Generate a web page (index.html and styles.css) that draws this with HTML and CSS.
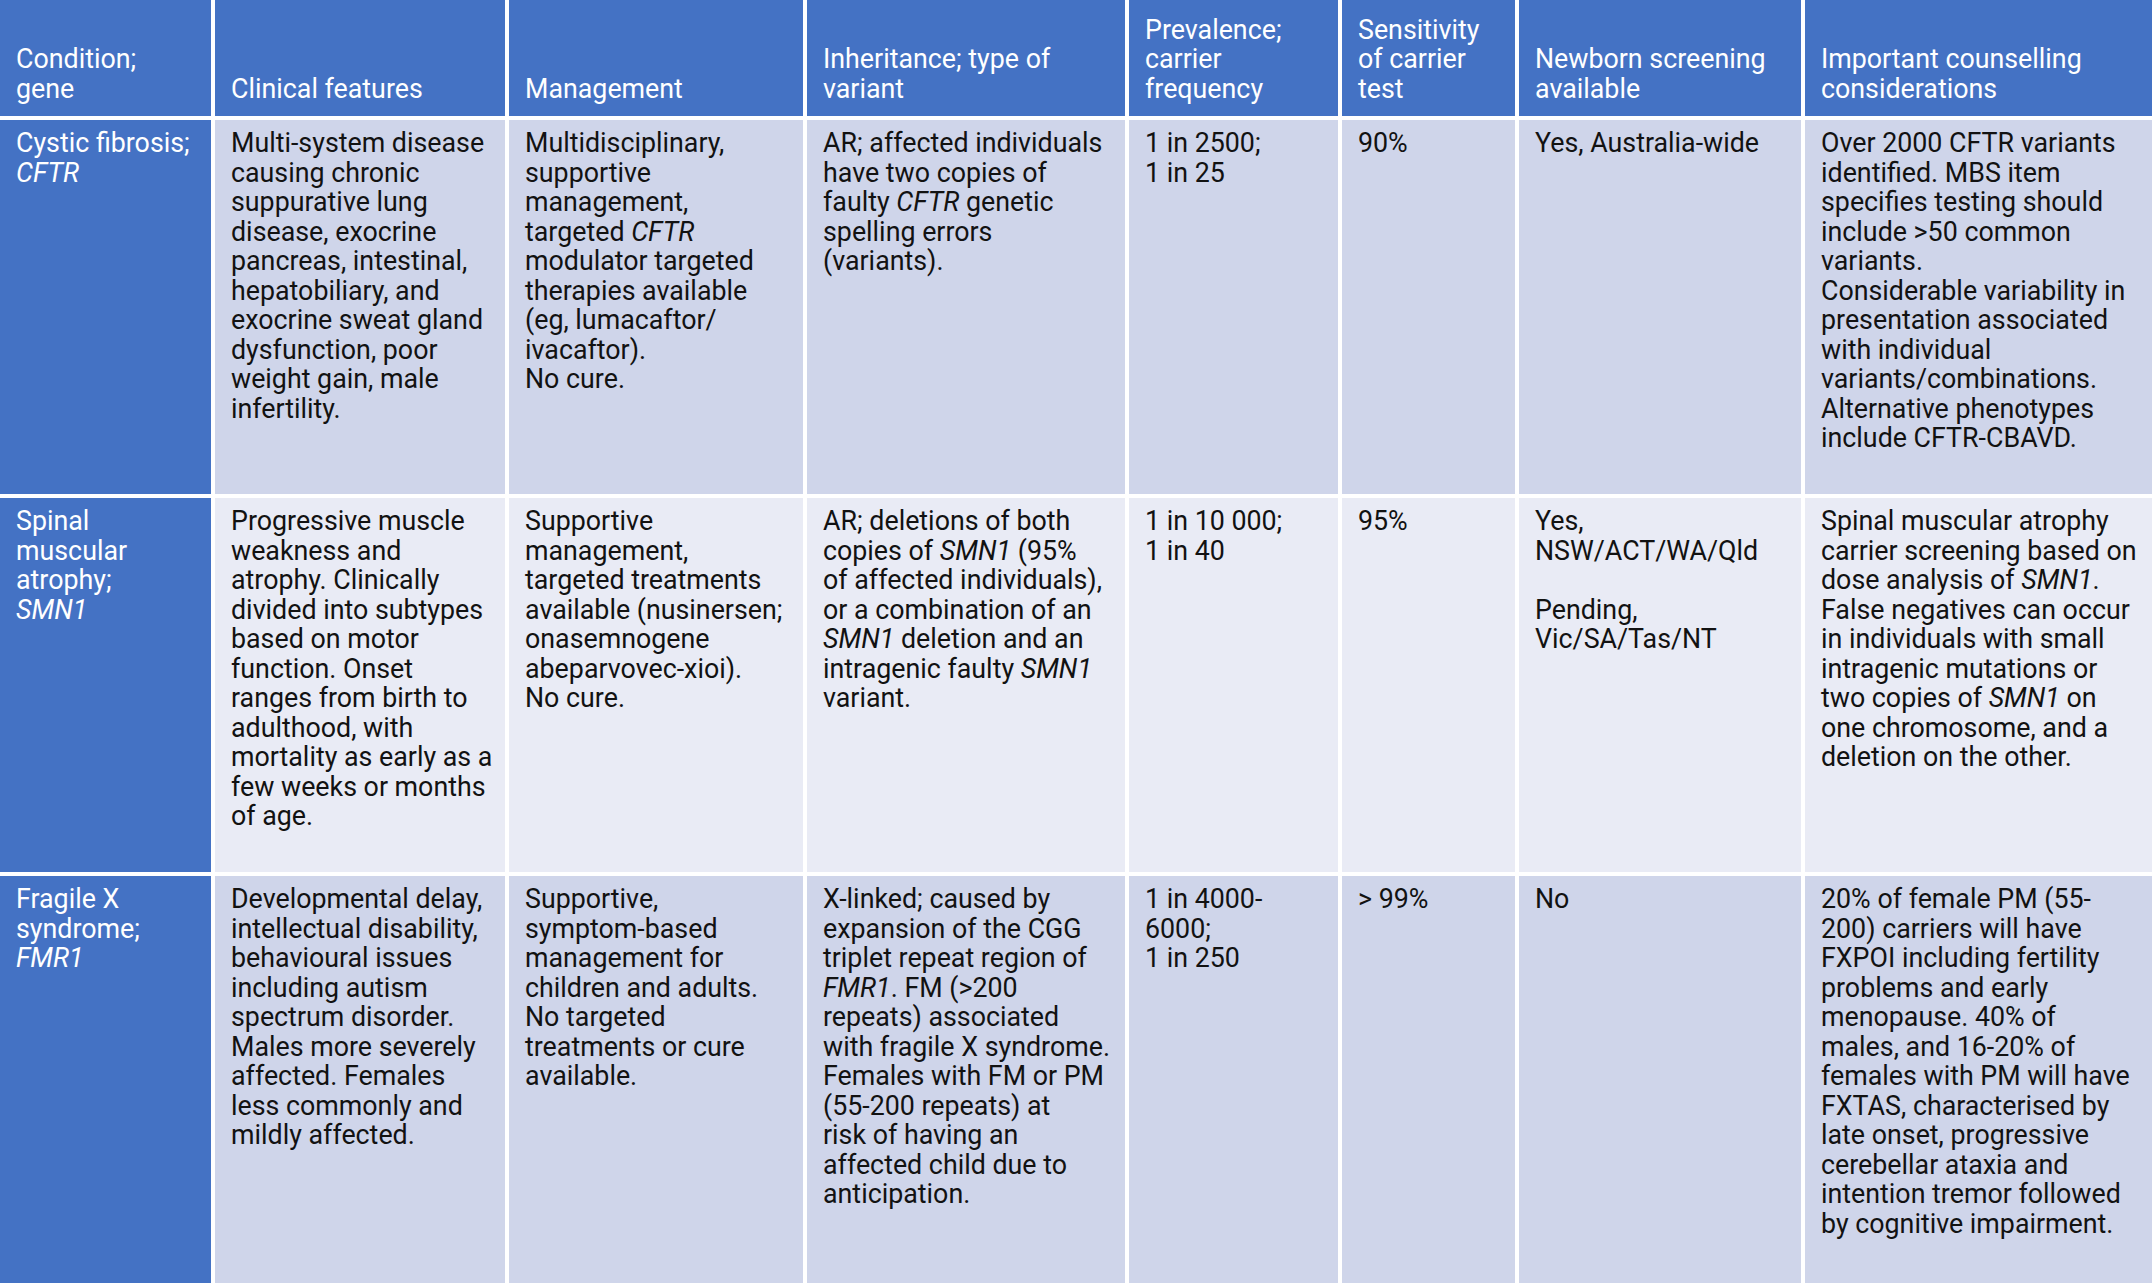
FILE: index.html
```html
<!DOCTYPE html>
<html lang="en">
<head>
<meta charset="utf-8">
<title>Carrier screening conditions</title>
<link rel="stylesheet" href="styles.css">
</head>
<body>
<div class="table" role="table">
  <div class="row head" role="row">
    <div class="cell" role="columnheader"><p>Condition;<br>gene</p></div>
    <div class="cell" role="columnheader"><p>Clinical features</p></div>
    <div class="cell" role="columnheader"><p>Management</p></div>
    <div class="cell" role="columnheader"><p>Inheritance; type of<br>variant</p></div>
    <div class="cell" role="columnheader"><p>Prevalence;<br>carrier<br>frequency</p></div>
    <div class="cell" role="columnheader"><p>Sensitivity<br>of carrier<br>test</p></div>
    <div class="cell" role="columnheader"><p>Newborn screening<br>available</p></div>
    <div class="cell" role="columnheader"><p>Important counselling<br>considerations</p></div>
  </div>

  <div class="row shade" role="row">
    <div class="cell name" role="rowheader">Cystic fibrosis;<br><i>CFTR</i></div>
    <div class="cell" role="cell">Multi-system disease<br>causing chronic<br>suppurative lung<br>disease, exocrine<br>pancreas, intestinal,<br>hepatobiliary, and<br>exocrine sweat gland<br>dysfunction, poor<br>weight gain, male<br>infertility.</div>
    <div class="cell" role="cell">Multidisciplinary,<br>supportive<br>management,<br>targeted <i>CFTR</i><br>modulator targeted<br>therapies available<br>(eg, lumacaftor/<br>ivacaftor).<br>No cure.</div>
    <div class="cell" role="cell">AR; affected individuals<br>have two copies of<br>faulty <i>CFTR</i> genetic<br>spelling errors<br>(variants).</div>
    <div class="cell" role="cell">1 in 2500;<br>1 in 25</div>
    <div class="cell" role="cell">90%</div>
    <div class="cell" role="cell">Yes, Australia-wide</div>
    <div class="cell" role="cell">Over 2000 CFTR variants<br>identified. MBS item<br>specifies testing should<br>include &gt;50 common<br>variants.<br>Considerable variability in<br>presentation associated<br>with individual<br>variants/combinations.<br>Alternative phenotypes<br>include CFTR-CBAVD.</div>
  </div>

  <div class="row light" role="row">
    <div class="cell name" role="rowheader">Spinal<br>muscular<br>atrophy;<br><i>SMN1</i></div>
    <div class="cell" role="cell">Progressive muscle<br>weakness and<br>atrophy. Clinically<br>divided into subtypes<br>based on motor<br>function. Onset<br>ranges from birth to<br>adulthood, with<br>mortality as early as a<br>few weeks or months<br>of age.</div>
    <div class="cell" role="cell">Supportive<br>management,<br>targeted treatments<br>available (nusinersen;<br>onasemnogene<br>abeparvovec-xioi).<br>No cure.</div>
    <div class="cell" role="cell">AR; deletions of both<br>copies of <i>SMN1</i> (95%<br>of affected individuals),<br>or a combination of an<br><i>SMN1</i> deletion and an<br>intragenic faulty <i>SMN1</i><br>variant.</div>
    <div class="cell" role="cell">1 in 10&nbsp;000;<br>1 in 40</div>
    <div class="cell" role="cell">95%</div>
    <div class="cell" role="cell"><p class="para">Yes,<br>NSW/ACT/WA/Qld</p><p class="para">Pending,<br>Vic/SA/Tas/NT</p></div>
    <div class="cell" role="cell">Spinal muscular atrophy<br>carrier screening based on<br>dose analysis of <i>SMN1</i>.<br>False negatives can occur<br>in individuals with small<br>intragenic mutations or<br>two copies of <i>SMN1</i> on<br>one chromosome, and a<br>deletion on the other.</div>
  </div>

  <div class="row shade last" role="row">
    <div class="cell name" role="rowheader">Fragile X<br>syndrome;<br><i>FMR1</i></div>
    <div class="cell" role="cell">Developmental delay,<br>intellectual disability,<br>behavioural issues<br>including autism<br>spectrum disorder.<br>Males more severely<br>affected. Females<br>less commonly and<br>mildly affected.</div>
    <div class="cell" role="cell">Supportive,<br>symptom-based<br>management for<br>children and adults.<br>No targeted<br>treatments or cure<br>available.</div>
    <div class="cell" role="cell">X-linked; caused by<br>expansion of the CGG<br>triplet repeat region of<br><i>FMR1</i>. FM (&gt;200<br>repeats) associated<br>with fragile X syndrome.<br>Females with FM or PM<br>(55-200 repeats) at<br>risk of having an<br>affected child due to<br>anticipation.</div>
    <div class="cell" role="cell">1 in 4000-<br>6000;<br>1 in 250</div>
    <div class="cell" role="cell">&gt; 99%</div>
    <div class="cell" role="cell">No</div>
    <div class="cell" role="cell">20% of female PM (55-<br>200) carriers will have<br>FXPOI including fertility<br>problems and early<br>menopause. 40% of<br>males, and 16-20% of<br>females with PM will have<br>FXTAS, characterised by<br>late onset, progressive<br>cerebellar ataxia and<br>intention tremor followed<br>by cognitive impairment.</div>
  </div>
</div>
</body>
</html>
```

FILE: styles.css
```css
html, body {
  margin: 0;
  padding: 0;
  background: #ffffff;
}

body {
  font-family: Roboto, "Liberation Sans", Arial, sans-serif;
  font-size: 26.8px;
  line-height: 29.5px;
  color: #121212;
}

.table {
  display: grid;
  grid-template-columns: 211px 290px 294px 318px 209px 173px 282px 347px;
  column-gap: 4px;
  row-gap: 4px;
  width: 2152px;
}

.row {
  display: contents;
}

.cell {
  padding: 9px 4px 40.5px 16px;
  white-space: normal;
}

.cell i {
  font-style: italic;
}

.cell p {
  margin: 0;
}

.head .cell {
  height: 116px;
  box-sizing: border-box;
  padding: 0 4px 12px 16px;
  background: #4472c4;
  color: #ffffff;
  display: flex;
  flex-direction: column;
  justify-content: flex-end;
}

.shade .cell {
  background: #cfd5ea;
}

.light .cell {
  background: #e9ebf5;
}

.row .name {
  background: #4472c4;
  color: #ffffff;
}

.last .cell {
  padding-bottom: 48px;
}

.cell .para + .para {
  margin-top: 29.5px;
}
```
